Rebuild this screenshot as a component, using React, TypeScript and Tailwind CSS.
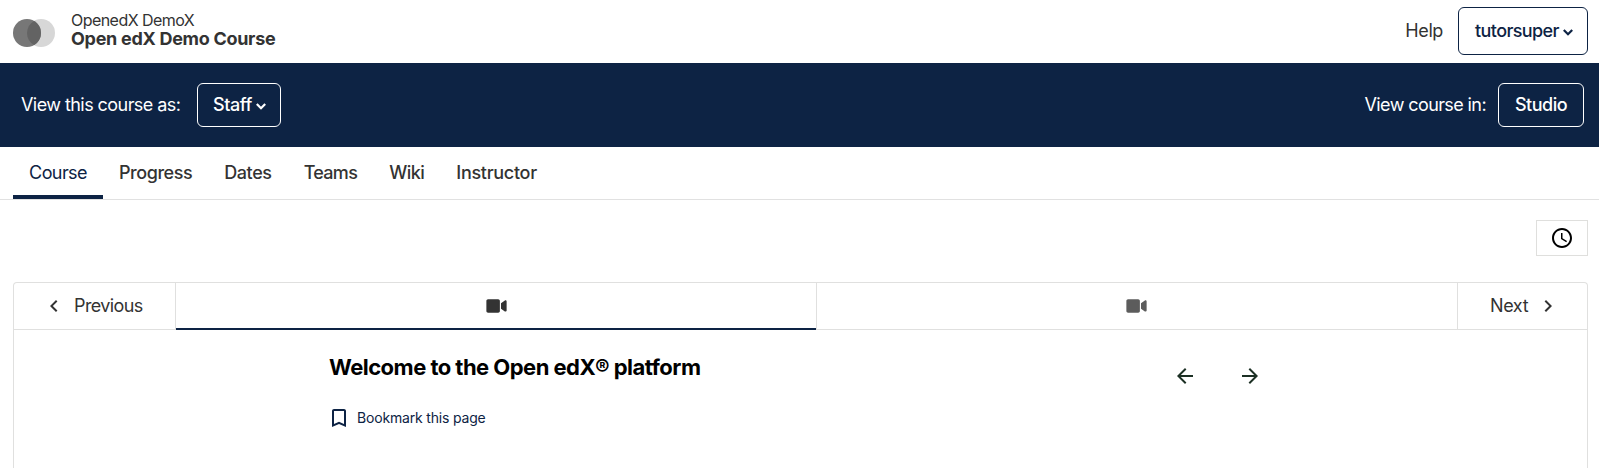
import { FaVideo } from "react-icons/fa";
import { MdAccessTime, MdArrowBack, MdArrowForward, MdBookmarkBorder, MdChevronLeft, MdChevronRight } from "react-icons/md";

const tabs = [
  { label: "Progress", spacing: "tracking-[-0.45px]" },
  { label: "Dates", spacing: "tracking-[-0.4px]" },
  { label: "Teams", spacing: "tracking-[-0.7px]" },
  { label: "Wiki", spacing: "tracking-[-0.5px]" },
  { label: "Instructor", spacing: "tracking-[-0.3px]" },
];

function Caret() {
  return (
    <svg className="mt-[4px] ml-[4px] h-[7px] w-[10px] shrink-0" viewBox="0 0 10 7" fill="none" stroke="currentColor" strokeWidth="2.2">
      <path d="M.8 1 5 5.2 9.2 1" />
    </svg>
  );
}

function Logo() {
  return (
    <svg className="mt-[3px] h-7 w-[42px] shrink-0" viewBox="0 0 42 28">
      <circle cx="28" cy="14" r="14" fill="#d7d7d7" />
      <circle cx="14" cy="14" r="14" fill="#777777" />
      <path d="M21 1.88a14 14 0 0 1 0 24.24a14 14 0 0 1 0-24.24Z" fill="#636363" />
    </svg>
  );
}

export default function App() {
  return (
    <div className="flex h-[468px] flex-col overflow-hidden bg-white font-['Inter',sans-serif] text-[18px] tracking-[-0.4px] whitespace-nowrap text-[#333333]">
      <header className="flex h-[63px] shrink-0 items-center pr-[11px] pl-[13px]">
        <Logo />
        <div className="ml-4 flex-1 pb-[4px]">
          <div className="-mt-px mb-px text-[16px] leading-[18px] tracking-[-0.55px]">OpenedX DemoX</div>
          <div className="leading-[18px] font-bold tracking-[-0.29px]">Open edX Demo Course</div>
        </div>
        <a className="mr-[15px] pb-[2px]">Help</a>
        <button className="mb-px flex h-12 w-[130px] items-center justify-center rounded-[6px] border border-[#0d2344] pb-px pl-[2px] font-[450] tracking-[-0.6px] text-[#0d2344]">
          tutorsuper
          <Caret />
        </button>
      </header>

      <div className="flex h-[84px] shrink-0 items-center bg-[#0d2344] pr-[15px] pl-[21px] text-white">
        <span className="w-[160px] pb-[2px] tracking-[-0.56px]">View this course as:</span>
        <button className="ml-[16px] flex h-11 w-[84px] items-center justify-center rounded-[6px] border border-white pb-[2px] pl-px font-medium tracking-[-0.45px]">
          Staff
          <Caret />
        </button>
        <span className="ml-auto pb-[2px] tracking-[-0.6px]">View course in:</span>
        <button className="ml-3 h-11 w-[86px] rounded-[6px] border border-white pb-[2px] font-medium tracking-[-0.5px]">Studio</button>
      </div>

      <nav className="flex h-[53px] shrink-0 border-b border-[#e1e1e1] pl-[13px] font-medium">
        <a className="flex w-[90px] items-center justify-center border-b-4 border-[#0d2344] pt-[2px] font-normal tracking-[-0.6px] text-[#0d2344]">Course</a>
        {tabs.map((tab) => (
          <a key={tab.label} className={`flex items-center px-4 pb-[2px] ${tab.spacing}`}>
            {tab.label}
          </a>
        ))}
      </nav>

      <div className="flex justify-end pt-5 pr-[11px]">
        <button className="flex h-9 w-[52px] items-center justify-center border border-[#dfdfdd] text-black">
          <MdAccessTime size={24} />
        </button>
      </div>

      <main className="mt-[26px] mr-[11px] ml-[13px] flex-1 rounded-t-[4px] border border-b-0 border-[#e0e0df]">
        <div className="flex h-[47px]">
          <button className="flex w-[162px] items-center border-r border-b border-[#e0e0df] pl-[28px]">
            <MdChevronLeft size={24} />
            <span className="ml-[8px] pb-[2px] tracking-[-0.6px]">Previous</span>
          </button>
          <button className="flex w-[640px] items-center justify-center border-b-2 border-[#0d2344] pl-px">
            <FaVideo className="h-[18px] w-[21px]" />
          </button>
          <button className="flex flex-1 items-center justify-center border-b border-l border-[#e0e0df] pr-px pb-px text-[#5c5c5c]">
            <FaVideo className="h-[18px] w-[21px]" />
          </button>
          <button className="flex w-[130px] items-center border-b border-l border-[#e0e0df] pl-8">
            <span className="pb-[2px]">Next</span>
            <MdChevronRight className="ml-2" size={24} />
          </button>
        </div>
        <div className="flex pl-[315px]">
          <div className="w-[844px] pt-[21px]">
            <h1 className="text-[22px] leading-[32px] font-bold tracking-[-0.53px] text-black">Welcome to the Open edX® platform</h1>
            <button className="mt-[22px] flex h-6 items-center text-[14px] tracking-[-0.18px] text-[#0d2344]">
              <MdBookmarkBorder className="mt-[2px] -ml-[2px]" size={24} />
              <span className="ml-[6px]">Bookmark this page</span>
            </button>
          </div>
          <div className="flex h-6 gap-[41px] pt-[34px] text-[#1c3024]">
            <MdArrowBack className="shrink-0" size={24} />
            <MdArrowForward className="shrink-0" size={24} />
          </div>
        </div>
      </main>
    </div>
  );
}
